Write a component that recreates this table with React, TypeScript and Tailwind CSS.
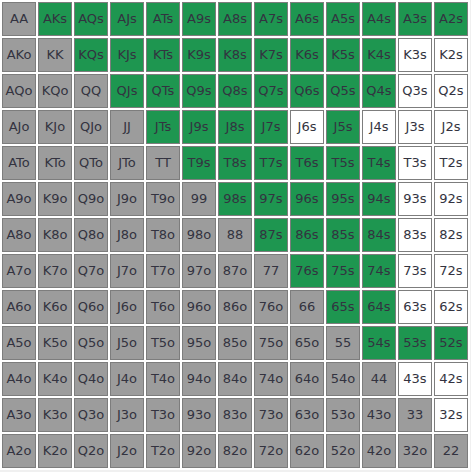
const ranks = ["A", "K", "Q", "J", "T", "9", "8", "7", "6", "5", "4", "3", "2"];

// which suited hands are in range (green) vs out (white)
const green: Record<string, boolean> = {};
const addSuited = (row: number, cols: number[]) => {
  cols.forEach((c) => (green[`${row}-${c}`] = true));
};
const range = (a: number, b: number) => Array.from({ length: b - a + 1 }, (_, i) => a + i);

addSuited(0, range(1, 12));
addSuited(1, range(2, 10));
addSuited(2, range(3, 10));
addSuited(3, [4, 5, 6, 7, 9]);
addSuited(4, range(5, 10));
addSuited(5, range(6, 10));
addSuited(6, range(7, 10));
addSuited(7, range(8, 10));
addSuited(8, [9, 10]);
addSuited(9, [10, 11, 12]);

function label(r: number, c: number) {
  if (r === c) return ranks[r] + ranks[c];
  if (c > r) return ranks[r] + ranks[c] + "s";
  return ranks[c] + ranks[r] + "o";
}

function Cell({ r, c }: { r: number; c: number }) {
  let bg = "bg-[#9c9c9c]";
  if (c > r) bg = green[`${r}-${c}`] ? "bg-[#1e9650]" : "bg-white";
  return (
    <div className={`${bg} w-[34px] h-[34px] border border-[#7d7d7d] flex items-center justify-center text-[13px] text-[#333340]`}>
      {label(r, c)}
    </div>
  );
}

export default function App() {
  return (
    <div className="w-[471px] h-[472px] bg-[#f0f0f0]" style={{ fontFamily: '"DejaVu Sans", Verdana, sans-serif' }}>
      <div className="w-[470px] h-[470px] bg-white p-[2px] grid grid-cols-[repeat(13,34px)] grid-rows-[repeat(13,34px)] gap-[2px]">
        {ranks.map((_, r) => ranks.map((__, c) => <Cell key={`${r}-${c}`} r={r} c={c} />))}
      </div>
    </div>
  );
}
